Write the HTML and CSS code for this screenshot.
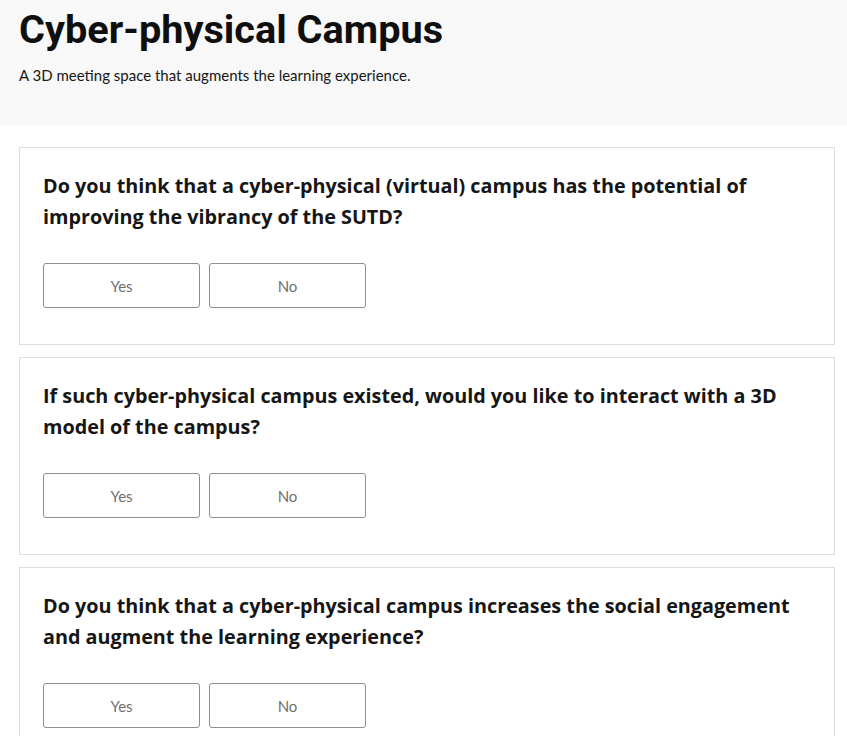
FILE: index.html
```html
<!DOCTYPE html>
<html lang="en">
<head>
<meta charset="utf-8">
<title>Cyber-physical Campus</title>
<link rel="stylesheet" href="styles.css">
</head>
<body>
<header class="hero">
  <h1 class="hero-title">Cyber-physical Campus</h1>
  <p class="hero-sub">A 3D meeting space that augments the learning experience.</p>
</header>
<main class="questions">
  <section class="card">
    <h2 class="card-q">Do you think that a cyber-physical (virtual) campus has the potential of improving the vibrancy of the SUTD?</h2>
    <div class="actions">
      <button class="btn">Yes</button>
      <button class="btn">No</button>
    </div>
  </section>
  <section class="card">
    <h2 class="card-q">If such cyber-physical campus existed, would you like to interact with a 3D model of the campus?</h2>
    <div class="actions">
      <button class="btn">Yes</button>
      <button class="btn">No</button>
    </div>
  </section>
  <section class="card">
    <h2 class="card-q">Do you think that a cyber-physical campus increases the social engagement and augment the learning experience?</h2>
    <div class="actions">
      <button class="btn">Yes</button>
      <button class="btn">No</button>
    </div>
  </section>
</main>
</body>
</html>
```
FILE: styles.css
```css
* { box-sizing: border-box; }
html, body { margin: 0; padding: 0; background: #ffffff; }
body {
  font-family: Lato, "Open Sans", sans-serif;
  color: #161616;
}
.hero {
  background: #f8f8f8;
  height: 125px;
  padding: 4px 20px 0 19px;
}
.hero-title {
  margin: 0;
  font-family: Roboto, Lato, sans-serif;
  font-size: 39.7px;
  line-height: 52px;
  font-weight: 700;
  color: #0f0f0f;
}
.hero-sub {
  margin: 8px 0 0;
  font-size: 15px;
  line-height: 22px;
  color: #161616;
}
.questions {
  padding: 22px 12px 0 19px;
  display: flex;
  flex-direction: column;
  gap: 12px;
}
.card {
  background: #fff;
  border: 1px solid #dedede;
  padding: 22px 23px 38px 23px;
  height: 198px;
}
.card-q {
  margin: 0;
  font-family: "Open Sans", Lato, sans-serif;
  font-size: 19.8px;
  line-height: 31px;
  font-weight: 700;
  color: #161616;
}
.actions {
  display: flex;
  gap: 9px;
  margin-top: 31px;
}
.btn {
  width: 157px;
  height: 45px;
  background: #fff;
  border: 1px solid #8d8d8d;
  border-radius: 3px;
  font-family: inherit;
  font-size: 15px;
  color: #6f6f6f;
}
```
